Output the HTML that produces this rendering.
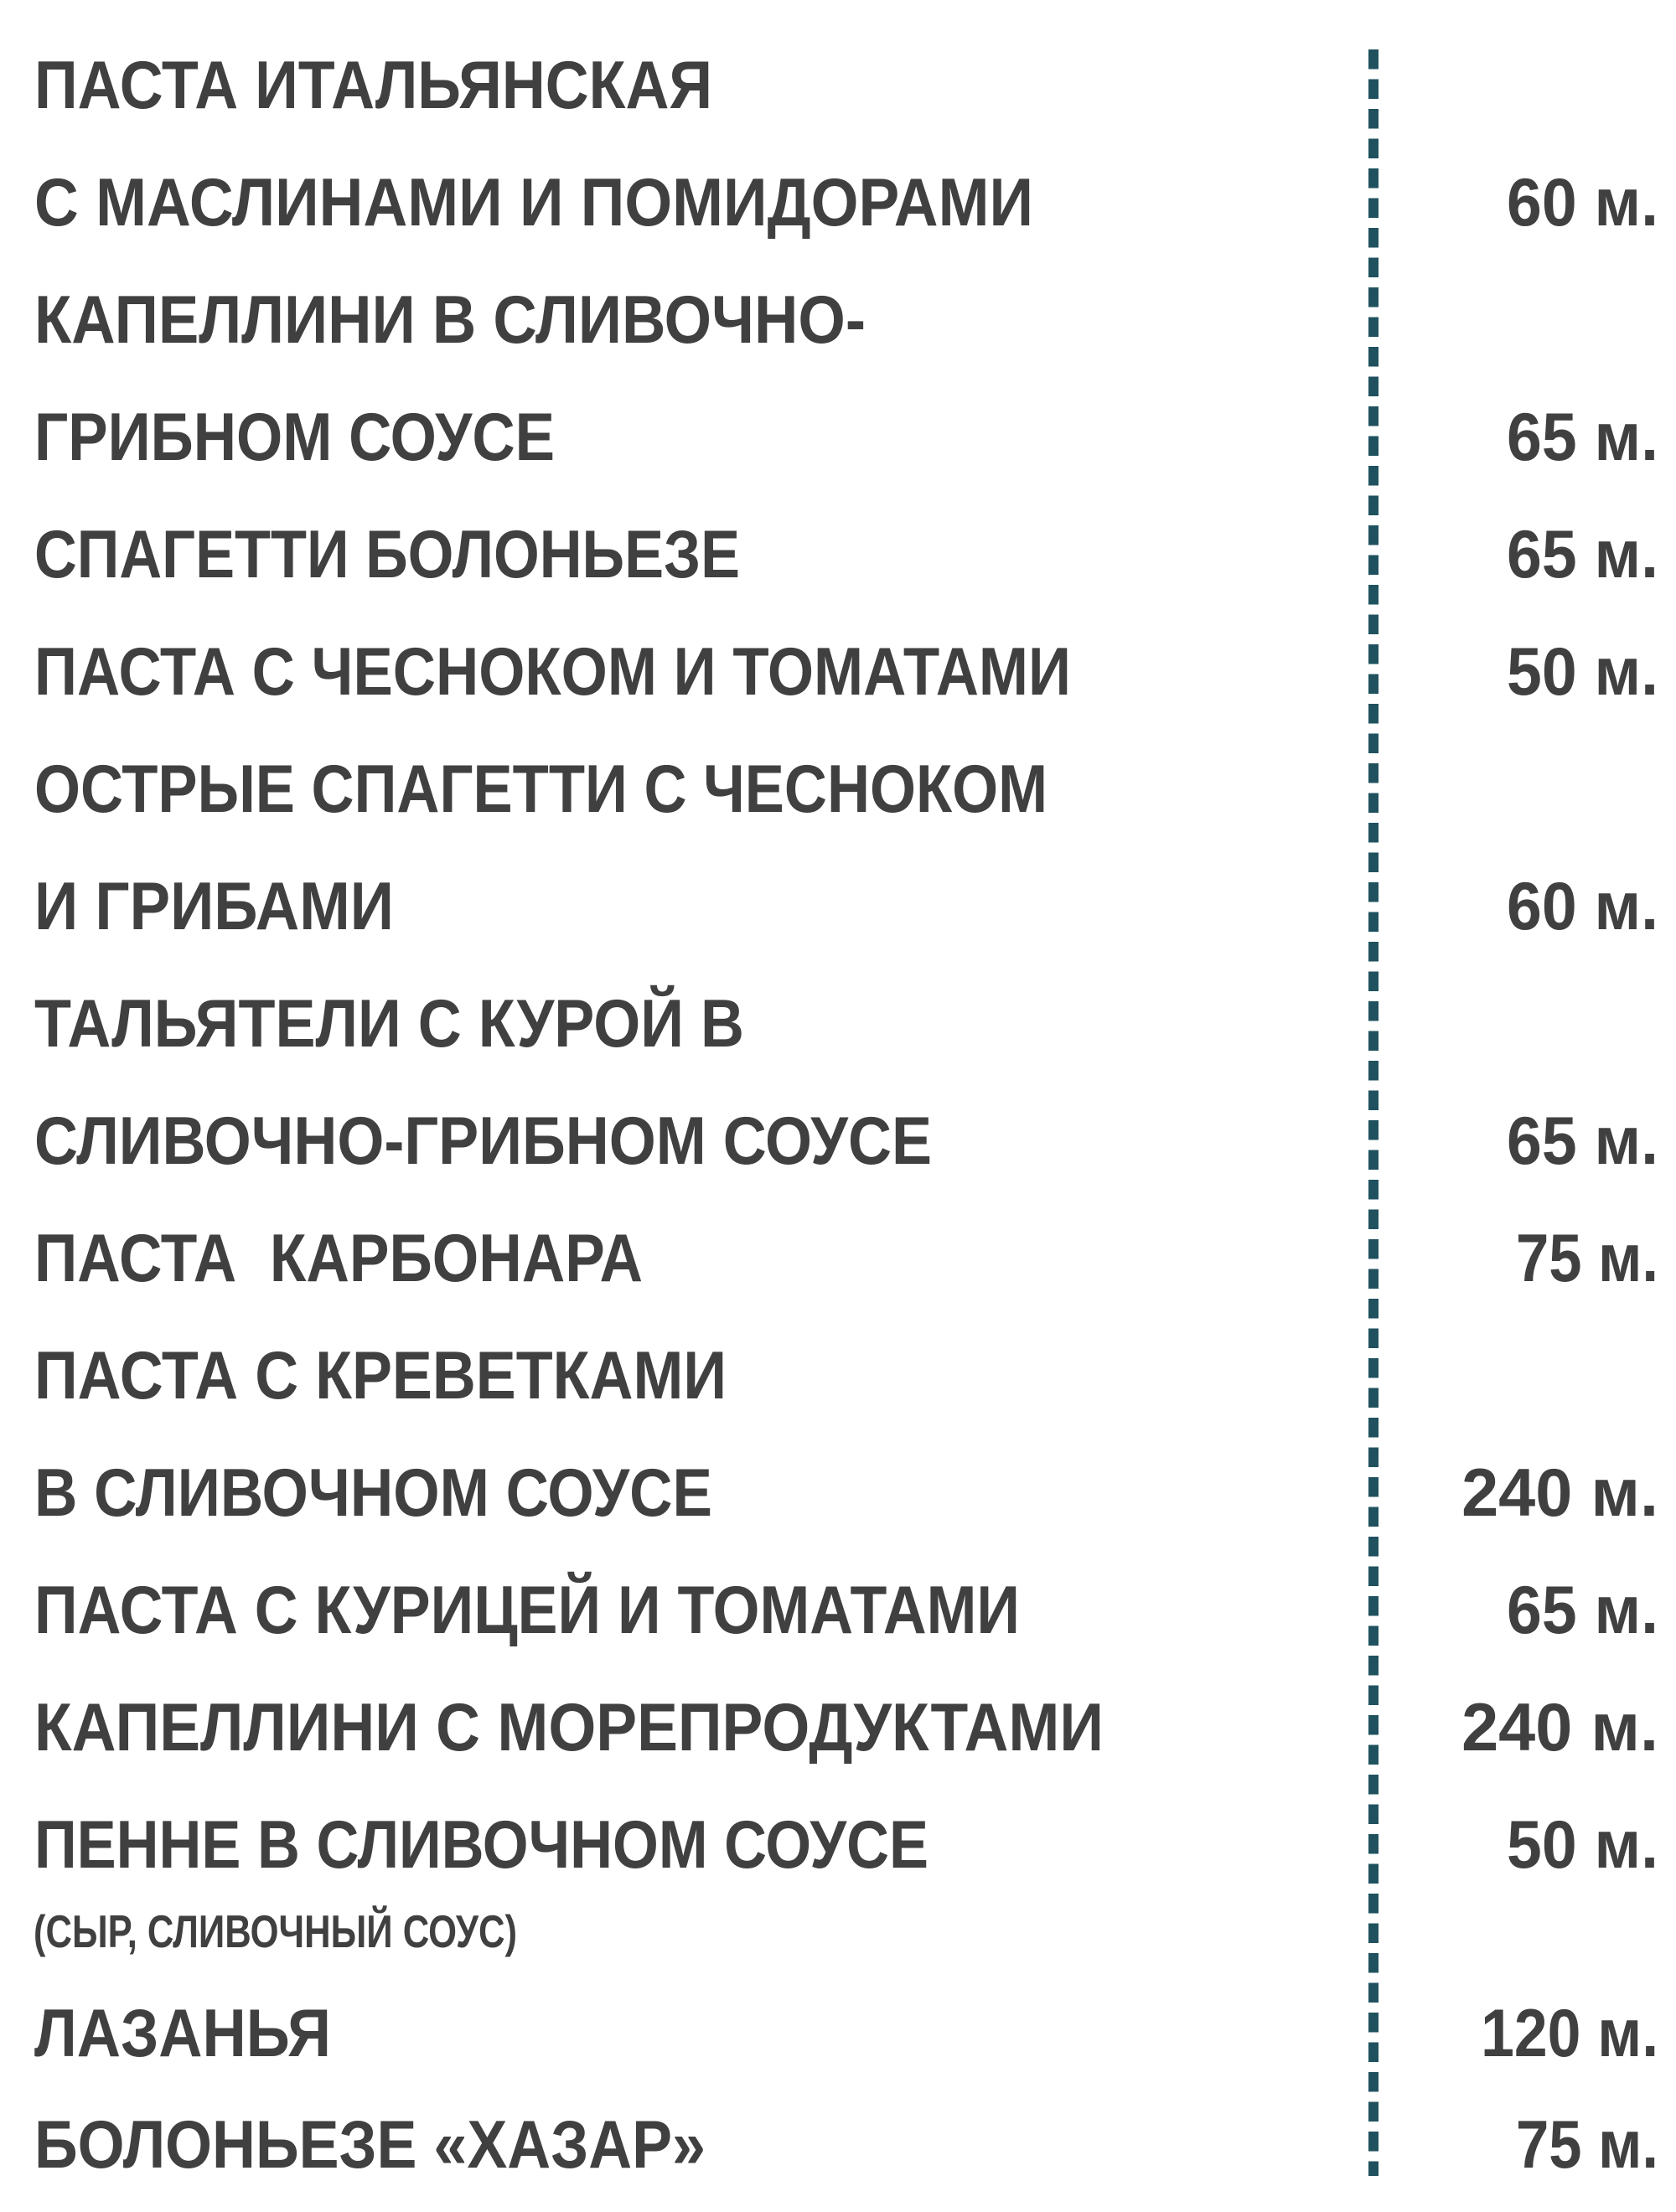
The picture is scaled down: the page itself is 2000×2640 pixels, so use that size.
<!DOCTYPE html>
<html><head><meta charset="utf-8">
<style>
html,body{margin:0;padding:0;background:#fff;}
body{width:2000px;height:2640px;position:relative;overflow:hidden;font-family:"Liberation Sans","DejaVu Sans",sans-serif;font-weight:bold;color:#404040;}
.t{position:absolute;left:41px;font-size:81px;line-height:1;white-space:pre;transform-origin:0 0;}
.p{position:absolute;right:21px;font-size:81px;line-height:1;white-space:nowrap;transform-origin:100% 0;}
.n{font-size:55px;left:40px;}
.line{position:absolute;left:1633px;top:59px;width:12px;height:2538px;background:repeating-linear-gradient(to bottom,#1f525e 0,#1f525e 23.5px,transparent 23.5px,transparent 35.5px);}
</style></head><body>
<div class="line"></div>
<div id="c"></div>
<script>
var rows=[
["ПАСТА ИТАЛЬЯНСКАЯ",131,850,""],
["С МАСЛИНАМИ И ПОМИДОРАМИ",271,1233,"60 м."],
["КАПЕЛЛИНИ В СЛИВОЧНО-",411,1033,""],
["ГРИБНОМ СОУСЕ",551,662,"65 м."],
["СПАГЕТТИ БОЛОНЬЕЗЕ",691,883,"65 м."],
["ПАСТА С ЧЕСНОКОМ И ТОМАТАМИ",831,1278,"50 м."],
["ОСТРЫЕ СПАГЕТТИ С ЧЕСНОКОМ",971,1250,""],
["И ГРИБАМИ",1111,470,"60 м."],
["ТАЛЬЯТЕЛИ С КУРОЙ В",1251,888,""],
["СЛИВОЧНО-ГРИБНОМ СОУСЕ",1391,1112,"65 м."],
["ПАСТА  КАРБОНАРА",1531,767,"75 м."],
["ПАСТА С КРЕВЕТКАМИ",1671,867,""],
["В СЛИВОЧНОМ СОУСЕ",1811,850,"240 м."],
["ПАСТА С КУРИЦЕЙ И ТОМАТАМИ",1951,1217,"65 м."],
["КАПЕЛЛИНИ С МОРЕПРОДУКТАМИ",2091,1317,"240 м."],
["ПЕННЕ В СЛИВОЧНОМ СОУСЕ",2231,1108,"50 м."],
["(СЫР, СЛИВОЧНЫЙ СОУС)",2325,617,"",1],
["ЛАЗАНЬЯ",2456,395,"120 м."],
["БОЛОНЬЕЗЕ «ХАЗАР»",2589,842,"75 м."]
];
var pw={"60 м.":181,"65 м.":181,"50 м.":181,"75 м.":170,"240 м.":235,"120 м.":212};
var c=document.getElementById('c');
rows.forEach(function(r){
 var d=document.createElement('div');d.className='t'+(r[4]?' n':'');d.textContent=r[0];
 var fs=r[4]?55:81;
 d.style.top=(r[1]-fs*0.8465)+'px';c.appendChild(d);
 var w=d.getBoundingClientRect().width;d.style.transform='scaleX('+(r[2]-(r[4]?40:41))/w+')';
 if(r[3]){var p=document.createElement('div');p.className='p';p.textContent=r[3];
 p.style.top=(r[1]-81*0.8465)+'px';c.appendChild(p);
 var pw2=p.getBoundingClientRect().width;p.style.transform='scaleX('+pw[r[3]]/pw2+')';}
});
</script>
</body></html>
